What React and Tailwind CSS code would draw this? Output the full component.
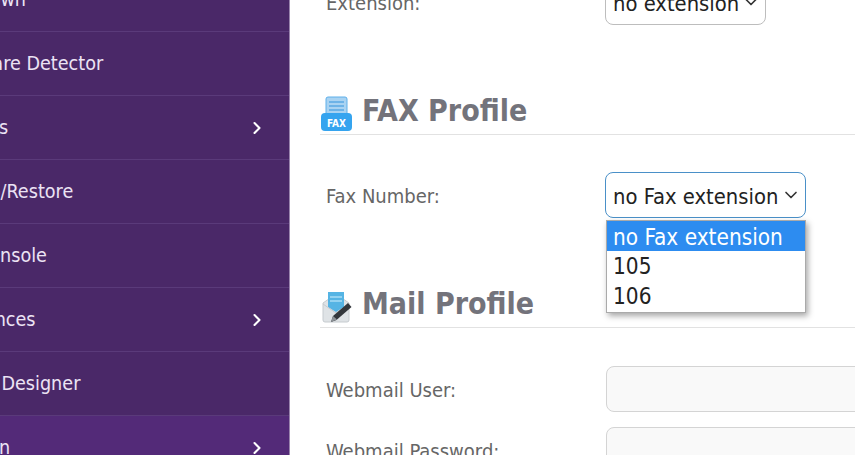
import { ChevronDown, ChevronRight } from 'lucide-react'

const menu = [
  { label: 'Shutdown', cls: 'ml-[-62px]' },
  { label: 'Malware Detector', cls: 'ml-[-53px]' },
  { label: 'Settings', cls: 'ml-[-64px]', more: true },
  { label: 'Backup/Restore', cls: 'ml-[-64px]' },
  { label: 'Web Console', cls: 'ml-[-67px]' },
  { label: 'Preferences', cls: 'ml-[-68px]', more: true },
  { label: 'Theme Designer', cls: 'ml-[-65px]' },
  { label: 'Admin', cls: 'ml-[-46px]', more: true, active: true },
]

function FaxIcon() {
  return (
    <svg width="33" height="36" viewBox="0 0 33 36" className="mt-[8px] shrink-0">
      <rect x="6" y="1" width="21" height="22" rx="2" fill="#a9d3f2" stroke="#5fb0ea" />
      <path d="M9 6h15M9 10h15M9 14h15M9 18h15" stroke="#5aa9e4" strokeWidth="1.4" />
      <rect x="1" y="17" width="31" height="18" rx="4" fill="#35a4ef" />
      <text x="16.5" y="30.5" textAnchor="middle" fontSize="10" fontWeight="700" fill="#fff" fontFamily="'DejaVu Sans', sans-serif">FAX</text>
    </svg>
  )
}

function MailIcon() {
  return (
    <svg width="33" height="36" viewBox="0 0 33 36" className="mt-[8px] shrink-0">
      <path d="M3 14 16 5l13 9v17a2 2 0 0 1-2 2H5a2 2 0 0 1-2-2z" fill="#dfe3e6" stroke="#c6cbcf" />
      <path d="M8 3h16v15l-8 5-8-5z" fill="#55b4e4" />
      <path d="M10 8h12M10 12h12" stroke="#a6dcf5" strokeWidth="1.5" />
      <path d="M3 15l13 9 13-9" fill="none" stroke="#c6cbcf" />
      <path d="M11 33l2-6 15-13 3.5 4-15 13z" fill="#33373c" />
      <path d="M11 33l2-6 4 3.500z" fill="#8d9297" />
    </svg>
  )
}

function SelectBox({ text, focused }) {
  return (
    <div className={`-ml-px flex h-[46px] items-center justify-between rounded-lg border bg-white pl-[7px] pr-[4px] text-[21.800px] text-[#222] ${focused ? 'w-[201px] border-[#4a90c8]' : 'w-[161px] border-[#bdbdbd]'}`}>
      <span className="pt-[4px]">{text}</span>
      <ChevronDown size={20} strokeWidth={2} className="text-[#333]" />
    </div>
  )
}

function Heading({ icon, children, cls }) {
  return (
    <div className={`flex h-[49px] items-center gap-[9px] border-b border-[#e2e2e2] text-[30px] font-bold text-[#73737b] ${cls}`}>
      {icon}
      <span>{children}</span>
    </div>
  )
}

function Row({ label, children, cls }) {
  return (
    <div className={`flex items-center pl-[6px] ${cls}`}>
      <div className="w-[280px] shrink-0 pt-[2px] text-[20px] text-[#666]">{label}</div>
      {children}
    </div>
  )
}

export default function App() {
  return (
    <div className="flex h-[455px] w-[855px] overflow-hidden bg-white font-['DejaVu_Sans',sans-serif] font-stretch-condensed">
      <aside className="h-full w-[290px] shrink-0 overflow-hidden border-r border-[#9a85ad] bg-[#4a2868]">
        <ul className="-mt-[32px]">
          {menu.map(m => (
            <li
              key={m.label}
              className={`flex h-[64px] items-center justify-between whitespace-nowrap border-b border-[#5a3a7a] pr-[22px] text-[19.600px] text-[#ece3f4] ${m.active ? 'bg-[#532a78]' : ''}`}
            >
              <span className={`pt-[1px] ${m.cls}`}>{m.label}</span>
              {m.more && <ChevronRight size={20} strokeWidth={2.500} className="text-white" />}
            </li>
          ))}
        </ul>
      </aside>

      <main className="min-w-0 flex-1 overflow-hidden pl-[30px]">
        <Row label="Extension:" cls="-mt-[21px]">
          <SelectBox text="no extension" />
        </Row>

        <Heading icon={<FaxIcon />} cls="mt-[61px]">FAX Profile</Heading>

        <Row label="Fax Number:" cls="mt-[37px]">
          <div className="relative">
            <SelectBox text="no Fax extension" focused />
            <ul className="absolute left-0 top-[48px] w-[200px] border border-[#aaa] bg-white text-[22.400px] leading-[29.500px] text-[#222] shadow-[2px_3px_6px_rgba(0,0,0,0.35)]">
              <li className="h-[30px] bg-[#2d8cf0] pl-[6px] pt-[2px] text-white">no Fax extension</li>
              <li className="h-[29px] pl-[6px] pt-[1px]">105</li>
              <li className="h-[32px] pl-[6px] pt-[2px]">106</li>
            </ul>
          </div>
        </Row>

        <Heading icon={<MailIcon />} cls="mt-[61px]">Mail Profile</Heading>

        <Row label="Webmail User:" cls="mt-[38px]">
          <input className="h-[46px] w-[300px] shrink-0 rounded-lg border border-[#d4d4d4] bg-[#f9f9f9]" />
        </Row>
        <Row label="Webmail Password:" cls="mt-[15px]">
          <input className="h-[46px] w-[300px] shrink-0 rounded-lg border border-[#d4d4d4] bg-[#f9f9f9]" />
        </Row>
      </main>
    </div>
  )
}
